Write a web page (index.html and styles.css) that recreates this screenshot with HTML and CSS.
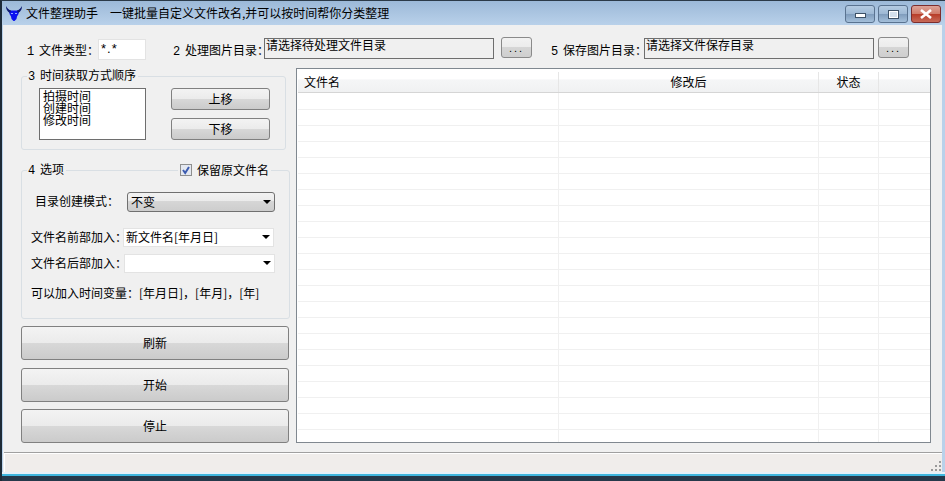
FILE: index.html
```html
<!DOCTYPE html>
<html lang="zh">
<head>
<meta charset="utf-8">
<title>文件整理助手</title>
<link rel="stylesheet" href="styles.css">
</head>
<body>
<div class="window">
  <header class="titlebar">
    <svg class="app-icon" width="16" height="16" viewBox="0 0 16 16"><path d="M3 5.500H13L12.500 9 11 11.500 10.500 14 8.500 16H7.500L5.500 14 5 11.500 3.500 9Z" fill="#0a10f0"/><path d="M0 1C0 4 1 6.500 4 8L5 5.500C3 5 1.500 3.500 0 1ZM16 1C16 4 15 6.500 12 8L11 5.500C13 5 14.500 3.500 16 1Z" fill="#0d1a70"/><rect x="5" y="8" width="2" height="1" fill="#8fa8ff"/><rect x="9" y="8" width="2" height="1" fill="#8fa8ff"/></svg>
    <span class="title">文件整理助手</span>
    <span class="subtitle">一键批量自定义文件改名,并可以按时间帮你分类整理</span>
    <div class="controls">
      <span class="ctl"><i class="ctl-min"></i></span>
      <span class="ctl"><i class="ctl-max"></i></span>
      <span class="ctl ctl-close">
        <svg width="14" height="10" viewBox="0 0 14 10"><path d="M2 1 12 9M12 1 2 9" stroke="#fff" stroke-width="2.600"/></svg>
      </span>
    </div>
  </header>

  <div class="client">
    <div class="toprow">
      <span class="lbl lbl-type"><b class="num">1</b>文件类型&#xFF1A;</span>
      <span class="input-type">*.*</span>
      <span class="lbl lbl-src"><b class="num">2</b>处理图片目录&#xFF1A;</span>
      <span class="path">请选择待处理文件目录</span>
      <span class="dots">...</span>
      <span class="lbl lbl-dst"><b class="num">5</b>保存图片目录&#xFF1A;</span>
      <span class="path">请选择文件保存目录</span>
      <span class="dots">...</span>
    </div>

    <div class="main">
      <aside class="side">
        <section class="group group-order">
          <span class="legend legend-order"><b class="num">3</b>时间获取方式顺序</span>
          <div class="listbox">
            <div>拍摄时间</div>
            <div>创建时间</div>
            <div>修改时间</div>
          </div>
          <div class="move-col">
            <span class="btn btn-move">上移</span>
            <span class="btn btn-move">下移</span>
          </div>
        </section>

        <section class="group group-opts">
          <span class="legend legend-opts"><b class="num">4</b>选项</span>
          <label class="legend legend-check">
            <svg class="check" width="12" height="12" viewBox="0 0 12 12"><rect x=".5" y=".5" width="11" height="11" fill="#e4e8f0" stroke="#8e8f8f"/><path d="M3 6 5.200 9 9 3" fill="none" stroke="#3c5cb0" stroke-width="2"/></svg>
            <span>保留原文件名</span>
          </label>
          <div class="opt opt-mode">
            <span class="opt-lbl-mode">目录创建模式&#xFF1A;</span>
            <span class="combo-btn">不变<i class="caret"></i></span>
          </div>
          <div class="opt opt-pre">
            <span class="opt-lbl-pre">文件名前部加入&#xFF1A;</span>
            <span class="combo">新文件名[年月日]<i class="caret"></i></span>
          </div>
          <div class="opt opt-post">
            <span class="opt-lbl">文件名后部加入&#xFF1A;</span>
            <span class="combo"><i class="caret"></i></span>
          </div>
          <p class="hint">可以加入时间变量&#xFF1A;[年月日]&#xFF0C;[年月]&#xFF0C;[年]</p>
        </section>

        <div class="actions">
          <span class="btn btn-big">刷新</span>
          <span class="btn btn-big">开始</span>
          <span class="btn btn-big">停止</span>
        </div>
      </aside>

      <section class="table">
        <div class="thead">
          <span class="c1">文件名</span>
          <span class="c2">修改后</span>
          <span class="c3">状态</span>
          <span class="c4"></span>
        </div>
        <div class="tbody">
          <div class="row"><i class="c1"></i><i class="c2"></i><i class="c3"></i><i class="c4"></i></div>
          <div class="row"><i class="c1"></i><i class="c2"></i><i class="c3"></i><i class="c4"></i></div>
          <div class="row"><i class="c1"></i><i class="c2"></i><i class="c3"></i><i class="c4"></i></div>
          <div class="row"><i class="c1"></i><i class="c2"></i><i class="c3"></i><i class="c4"></i></div>
          <div class="row"><i class="c1"></i><i class="c2"></i><i class="c3"></i><i class="c4"></i></div>
          <div class="row"><i class="c1"></i><i class="c2"></i><i class="c3"></i><i class="c4"></i></div>
          <div class="row"><i class="c1"></i><i class="c2"></i><i class="c3"></i><i class="c4"></i></div>
          <div class="row"><i class="c1"></i><i class="c2"></i><i class="c3"></i><i class="c4"></i></div>
          <div class="row"><i class="c1"></i><i class="c2"></i><i class="c3"></i><i class="c4"></i></div>
          <div class="row"><i class="c1"></i><i class="c2"></i><i class="c3"></i><i class="c4"></i></div>
          <div class="row"><i class="c1"></i><i class="c2"></i><i class="c3"></i><i class="c4"></i></div>
          <div class="row"><i class="c1"></i><i class="c2"></i><i class="c3"></i><i class="c4"></i></div>
          <div class="row"><i class="c1"></i><i class="c2"></i><i class="c3"></i><i class="c4"></i></div>
          <div class="row"><i class="c1"></i><i class="c2"></i><i class="c3"></i><i class="c4"></i></div>
          <div class="row"><i class="c1"></i><i class="c2"></i><i class="c3"></i><i class="c4"></i></div>
          <div class="row"><i class="c1"></i><i class="c2"></i><i class="c3"></i><i class="c4"></i></div>
          <div class="row"><i class="c1"></i><i class="c2"></i><i class="c3"></i><i class="c4"></i></div>
          <div class="row"><i class="c1"></i><i class="c2"></i><i class="c3"></i><i class="c4"></i></div>
          <div class="row"><i class="c1"></i><i class="c2"></i><i class="c3"></i><i class="c4"></i></div>
          <div class="row"><i class="c1"></i><i class="c2"></i><i class="c3"></i><i class="c4"></i></div>
          <div class="row"><i class="c1"></i><i class="c2"></i><i class="c3"></i><i class="c4"></i></div>
          <div class="row row-last"><i class="c1"></i><i class="c2"></i><i class="c3"></i><i class="c4"></i></div>
        </div>
      </section>
    </div>

    <div class="statusbar">
      <svg class="grip" width="12" height="12" viewBox="0 0 12 12" fill="#9a9a9a"><rect x="9" y="1" width="2" height="2"/><rect x="5" y="5" width="2" height="2"/><rect x="9" y="5" width="2" height="2"/><rect x="1" y="9" width="2" height="2"/><rect x="5" y="9" width="2" height="2"/><rect x="9" y="9" width="2" height="2"/></svg>
    </div>
  </div>
  <div class="frame-bottom"></div>
</div>
</body>
</html>
```

FILE: styles.css
```css
* { box-sizing: border-box; }
html, body { margin: 0; padding: 0; }
body {
  width: 945px;
  height: 481px;
  overflow: hidden;
  background: #26384a;
  font-family: "Noto Sans CJK SC", "Liberation Sans", sans-serif;
  font-size: 12px;
  line-height: 12px;
  color: #000;
}
i { display: block; font-style: normal; }
.num {
  display: inline-block;
  width: 12px;
  font-weight: normal;
  font-family: "Liberation Mono", monospace;
  font-size: 12px;
}

.window {
  width: 945px;
  height: 481px;
  display: flex;
  flex-direction: column;
  background: #b9d1ea;
  border-left: 2px solid #1d2a36;
  border-top: 1px solid #2b3a48;
}

/* title bar */
.titlebar {
  flex: none;
  height: 24px;
  display: flex;
  align-items: center;
  padding-left: 4px;
  background: linear-gradient(#9cb9d8, #b9d1ea);
}
.app-icon { flex: none; margin-right: 4px; }
.title { width: 84px; }
.controls { margin-left: auto; display: flex; gap: 3px; align-self: flex-start; margin-right: 4px; margin-top: 4px; }
.ctl {
  width: 30px;
  height: 18px;
  border: 1px solid #5a7390;
  border-radius: 3px;
  background: linear-gradient(#b4cbe2 0, #9db8d4 50%, #7f9cbc 51%, #a4bfda 100%);
  display: flex;
  align-items: center;
  justify-content: center;
}
.ctl-min { width: 11px; height: 5px; margin-top: 3px; background: #fff; border: 1px solid #3d5166; }
.ctl-max { width: 11px; height: 9px; background: #d4e0ec; border: 2px solid #fff; outline: 1px solid #3d5166; outline-offset: -1px; }
.ctl-close {
  border-color: #7c2d2d;
  background: linear-gradient(#dca398 0, #d07a68 50%, #b83c28 51%, #c76a58 100%);
}

/* client */
.client {
  flex: none;
  margin: 0 3px 0 1px;
  background: #f0f0f0;
  display: flex;
  flex-direction: column;
  border-left: 1px solid #f0f0f0;
}
.toprow {
  flex: none;
  height: 43px;
  padding-top: 13px;
  display: flex;
  align-items: flex-start;
}
.lbl { white-space: pre; padding-top: 6px; }
.lbl-type { margin-left: 23px; width: 71px; }
.input-type {
  width: 48px;
  height: 21px;
  margin-top: 1px;
  padding: 3px 0 0 2px;
  background: #fff;
  border: 1px solid #e3e3e3;
  font-family: "Liberation Sans", sans-serif;
  font-size: 13px;
  letter-spacing: 1px;
}
.lbl-src { margin-left: 27px; width: 91px; }
.path {
  width: 230px;
  height: 21px;
  padding: 0 0 0 1px;
  background: #f0f0f0;
  border: 1px solid #6e6e6e;
}
.dots {
  width: 31px;
  height: 21px;
  margin-left: 7px;
  margin-top: -1px;
  border: 1px solid #8a8a8a;
  border-radius: 3px;
  background: linear-gradient(#f2f2f2 0, #ececec 45%, #d6d6d6 46%, #cfcfcf 100%);
  text-align: center;
  line-height: 21px;
  letter-spacing: 2px;
  font-family: "Liberation Sans", sans-serif;
  font-size: 11px;
}
.lbl-dst { margin-left: 19px; width: 93px; }
.lbl-dst + .path + .dots { margin-left: 4px; }

.main {
  flex: none;
  height: 375px;
  display: flex;
  align-items: flex-start;
}

/* left side */
.side {
  flex: none;
  width: 292px;
  padding-left: 17px;
  padding-top: 8px;
  display: flex;
  flex-direction: column;
}
.group {
  position: relative;
  border: 1px solid #d9dfe4;
  border-radius: 3px;
  background: #f0f0f0;
}
.legend {
  position: absolute;
  background: #f0f0f0;
  white-space: pre;
}
.group-order {
  width: 265px;
  height: 74px;
  display: flex;
  padding: 11px 0 0 17px;
}
.legend-order { left: 5px; top: -8px; padding: 0 2px 0 1px; }
.listbox {
  width: 107px;
  height: 52px;
  background: #fff;
  border: 1px solid #6e6e6e;
  padding: 1px 0 0 3px;
}
.move-col {
  margin-left: 25px;
  display: flex;
  flex-direction: column;
  gap: 8px;
}
.btn {
  display: flex;
  align-items: center;
  justify-content: center;
  padding-bottom: 1px;
  border: 1px solid #808080;
  border-radius: 3px;
  background: linear-gradient(#f3f3f3 0, #ebebeb 49%, #d8d8d8 50%, #cbcbcb 100%);
}
.btn-move { width: 99px; height: 22px; }

.group-opts {
  width: 269px;
  height: 149px;
  margin-top: 20px;
  padding-top: 20px;
}
.legend-opts { left: 5px; top: -8px; padding: 0 2px 0 1px; }
.legend-check {
  left: 156px;
  top: -8px;
  display: flex;
  align-items: center;
  gap: 5px;
  padding: 0 2px;
  height: 14px;
}
.check { flex: none; }
.opt { display: flex; align-items: center; white-space: nowrap; }
.opt-mode { height: 21px; padding-left: 13px; }
.opt-lbl-mode { width: 92px; padding-bottom: 2px; }
.opt-pre { height: 20px; margin-top: 15px; padding-left: 9px; }
.opt-post { height: 20px; margin-top: 6px; padding-left: 9px; }
.opt-lbl-pre { width: 92px; }
.opt-lbl { width: 93px; }
.combo-btn {
  width: 148px;
  height: 20px;
  padding-left: 3px;
  display: flex;
  align-items: center;
  border: 1px solid #707070;
  border-radius: 3px;
  background: linear-gradient(#f2f2f2 0, #ebebeb 45%, #d6d6d6 46%, #cdcdcd 100%);
}
.combo {
  width: 151px;
  height: 19px;
  padding-left: 2px;
  display: flex;
  align-items: center;
  background: #fff;
  border: 1px solid #e3e3e3;
}
.caret {
  margin-left: auto;
  margin-right: 3px;
  width: 0;
  height: 0;
  border-left: 4px solid transparent;
  border-right: 4px solid transparent;
  border-top: 4px solid #000;
}
.hint { margin: 14px 0 0 9px; white-space: nowrap; }

.actions {
  margin-top: 7px;
  display: flex;
  flex-direction: column;
  gap: 8px;
}
.btn-big { width: 268px; height: 34px; }
.btn-big:last-child { margin-top: -1px; }

/* table */
.table {
  flex: none;
  width: 635px;
  height: 375px;
  padding: 1px 1px 0;
  background: #fff;
  border: 1px solid #808890;
}
.thead {
  height: 23px;
  width: 632px;
  display: flex;
  padding-top: 2px;
  background: linear-gradient(#fff 0, #fff 40%, #f5f6f7 45%, #f0f1f2 100%);
  border-bottom: 1px solid #d5d5d5;
}
.thead span {
  display: flex;
  align-items: center;
  border-right: 1px solid #e6e6e6;
}
.c1 { width: 261px; flex: none; }
.c2 { width: 260px; flex: none; }
.c3 { width: 60px; flex: none; }
.c4 { width: 51px; flex: none; }
.thead .c1 { padding-left: 6px; }
.thead .c2, .thead .c3 { justify-content: center; }
.thead .c4 { border-right: 0; }
.tbody { width: 632px; }
.row {
  height: 16px;
  display: flex;
  border-bottom: 1px solid #f0f0f0;
}
.row:first-child { height: 17px; }
.row-last { height: 12px; border-bottom: 0; }
.row i { border-right: 1px solid #f0f0f0; }
.row .c4 { border-right: 0; }

/* status bar */
.statusbar {
  flex: none;
  height: 20px;
  margin-top: 9px;
  position: relative;
  background: #f0edeb;
  border-top: 1px solid #a0a0a0;
  box-shadow: inset 0 1px 0 #fff, inset 1px 0 0 #fff;
}
.grip { position: absolute; right: 0; bottom: 0; }

.frame-bottom {
  flex: 1;
  background: linear-gradient(#e6f0f8 0, #e6f0f8 2px, #3fb6de 2px, #3fb6de 100%);
  border-bottom: 5px solid #26384a;
}
```
